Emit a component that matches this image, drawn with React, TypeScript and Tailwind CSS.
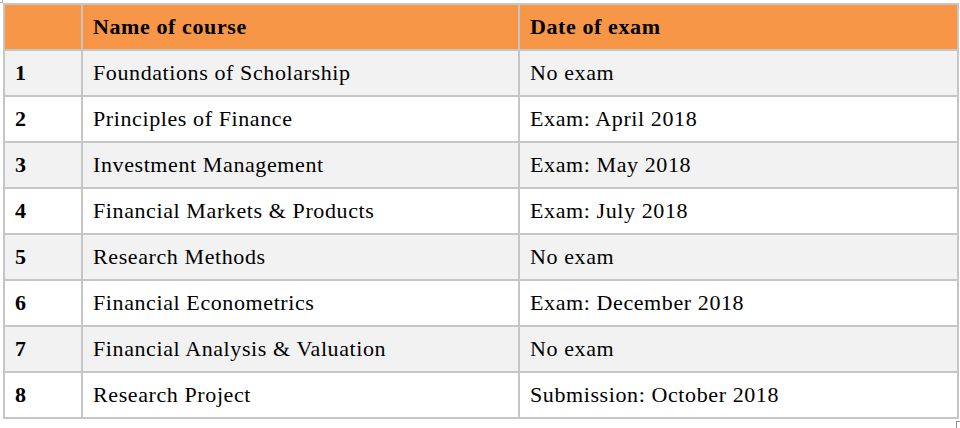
const courses = [
  { no: "1", name: "Foundations of Scholarship", exam: "No exam" },
  { no: "2", name: "Principles of Finance", exam: "Exam: April 2018" },
  { no: "3", name: "Investment Management", exam: "Exam: May 2018" },
  { no: "4", name: "Financial Markets & Products", exam: "Exam: July 2018" },
  { no: "5", name: "Research Methods", exam: "No exam" },
  { no: "6", name: "Financial Econometrics", exam: "Exam: December 2018" },
  { no: "7", name: "Financial Analysis & Valuation", exam: "No exam" },
  { no: "8", name: "Research Project", exam: "Submission: October 2018" },
]

export default function App() {
  return (
    <div className="relative w-[960px] h-[428px] bg-white pt-[3px] pl-[3px] font-['Liberation_Serif',serif] text-[22px] tracking-[0.6px] text-black">
      {/* page corner marks */}
      <div className="absolute left-0 top-0 w-[3px] h-[3px] border-r border-b border-[#b0b0b0]" />
      <div className="absolute left-[956px] top-[421px] w-[4px] h-[7px] border-l border-t border-[#909090]" />

      <table className="table-fixed border-collapse w-[954px]">
        <colgroup>
          <col className="w-[78px]" />
          <col className="w-[437px]" />
          <col className="w-[439px]" />
        </colgroup>
        <thead>
          <tr className="bg-[#f79646] h-[46px]">
            <th className="border-2 border-[#c6c6c6] px-[10px] pb-[2px] text-left font-bold" />
            <th className="border-2 border-[#c6c6c6] px-[10px] pb-[2px] text-left font-bold">Name of course</th>
            <th className="border-2 border-[#c6c6c6] px-[10px] pb-[2px] text-left font-bold">Date of exam</th>
          </tr>
        </thead>
        <tbody>
          {courses.map((c, i) => (
            <tr key={c.no} className={`h-[46px] ${i % 2 === 0 ? "bg-[#f2f2f2]" : "bg-white"}`}>
              <td className="border-2 border-[#c6c6c6] px-[10px] pb-[2px] font-bold">{c.no}</td>
              <td className="border-2 border-[#c6c6c6] px-[10px] pb-[2px]">{c.name}</td>
              <td className="border-2 border-[#c6c6c6] px-[10px] pb-[2px]">{c.exam}</td>
            </tr>
          ))}
        </tbody>
      </table>
    </div>
  )
}
